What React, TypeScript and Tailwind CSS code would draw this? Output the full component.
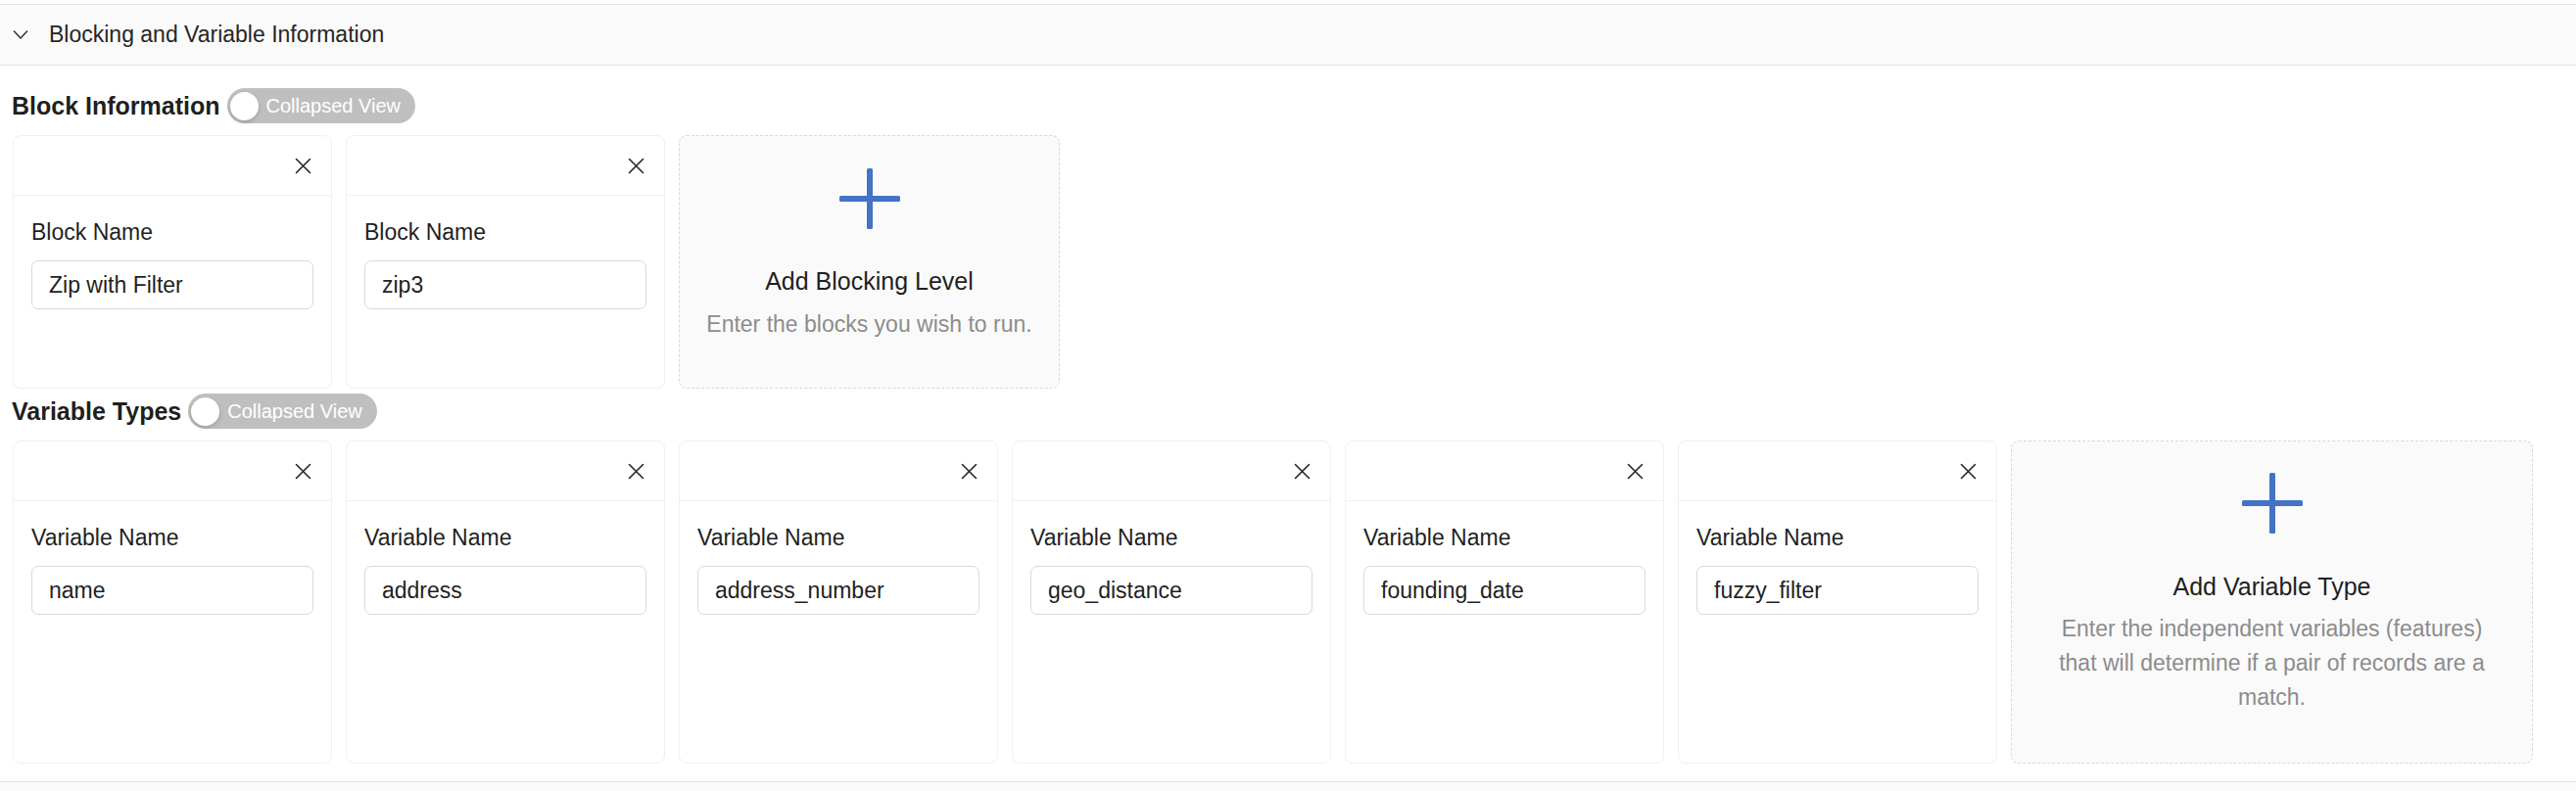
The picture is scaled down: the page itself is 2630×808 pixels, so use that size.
import React from "react";

const blocks = ["Zip with Filter", "zip3"];
const variables = [
	"name",
	"address",
	"address_number",
	"geo_distance",
	"founding_date",
	"fuzzy_filter",
];

function CloseIcon() {
	return (
		<svg width="17" height="17" viewBox="0 0 17 17" fill="none">
			<path
				d="M1.5 1.5 15.5 15.5M15.5 1.5 1.5 15.5"
				stroke="#262626"
				strokeWidth="1.6"
				strokeLinecap="round"
			/>
		</svg>
	);
}

function PlusIcon() {
	return (
		<svg width="62" height="62" viewBox="0 0 62 62">
			<rect x="28" y="0" width="6" height="62" rx="1.5" fill="#4472c4" />
			<rect x="0" y="28" width="62" height="6" rx="1.5" fill="#4472c4" />
		</svg>
	);
}

function Toggle() {
	return (
		<button className="ml-[7px] flex h-[36px] items-center rounded-full bg-[#bfbfbf] pl-[3px] pr-[15px]">
			<span className="h-[29px] w-[29px] rounded-full bg-white shadow-[0_2px_4px_rgba(0,35,11,0.2)]" />
			<span className="ml-[8px] text-[20px] leading-none text-white">
				Collapsed View
			</span>
		</button>
	);
}

function SectionTitle({ title, className }: { title: string; className: string }) {
	return (
		<div className={"flex h-[36px] items-center px-[12px] " + className}>
			<h3 className="text-[25px] font-bold leading-none text-[#1f1f1f]">
				{title}
			</h3>
			<Toggle />
		</div>
	);
}

function FieldCard({ label, value }: { label: string; value: string }) {
	return (
		<div className="flex w-[326px] flex-col rounded-[8px] border border-[#f0f0f0] bg-white">
			<div className="flex h-[61px] items-center justify-end border-b border-[#f0f0f0] pr-[20px]">
				<CloseIcon />
			</div>
			<div className="px-[18px] pt-[21px]">
				<div className="text-[23px] leading-[32px] text-[#1f1f1f]">{label}</div>
				<div className="mt-[13px] flex h-[50px] items-center rounded-[7px] border border-[#d9d9d9] bg-white pl-[17px] text-[23px] text-[#1f1f1f]">
					{value}
				</div>
			</div>
		</div>
	);
}

export default function App() {
	return (
		<div className="h-[808px] w-[2630px] overflow-hidden bg-white font-['Liberation_Sans',Arial,sans-serif] text-[#1f1f1f]">
			<div className="h-[4px]" />
			<div className="flex h-[63px] items-center border-y border-[#e3e3e3] bg-[#fafafa] pl-[13px]">
				<svg width="16" height="11" viewBox="0 0 16 11" fill="none">
					<path
						d="M1 1.5 8 9 15 1.5"
						stroke="#333333"
						strokeWidth="1.5"
						strokeLinejoin="round"
					/>
				</svg>
				<span className="ml-[21px] text-[23px] text-[#262626]">
					Blocking and Variable Information
				</span>
			</div>

			<SectionTitle title="Block Information" className="mt-[23px]" />
			<div className="mt-[12px] flex gap-[14px] px-[13px]">
				{blocks.map((b) => (
					<FieldCard key={b} label="Block Name" value={b} />
				))}
				<div className="flex h-[259px] w-[389px] flex-col items-center rounded-[8px] border border-dashed border-[#d9d9d9] bg-[#fafafa] pt-[33px] text-center">
					<PlusIcon />
					<div className="mt-[36px] text-[25px] leading-[35px] text-[#1f1f1f]">
						Add Blocking Level
					</div>
					<div className="mt-[9px] whitespace-nowrap text-[23px] leading-[35px] text-[#8c8c8c]">
						Enter the blocks you wish to run.
					</div>
				</div>
			</div>

			<SectionTitle title="Variable Types" className="mt-[5px]" />
			<div className="mt-[12px] flex gap-[14px] px-[13px]">
				{variables.map((v) => (
					<FieldCard key={v} label="Variable Name" value={v} />
				))}
				<div className="flex h-[330px] w-[533px] flex-col items-center rounded-[8px] border border-dashed border-[#d9d9d9] bg-[#fafafa] px-[38px] pt-[32px] text-center">
					<PlusIcon />
					<div className="mt-[37px] text-[25px] leading-[35px] text-[#1f1f1f]">
						Add Variable Type
					</div>
					<div className="mt-[8px] text-[23px] leading-[35px] text-[#8c8c8c]">
						Enter the independent variables (features) that will determine if a
						pair of records are a match.
					</div>
				</div>
			</div>

			<div className="mt-[18px] h-[40px] border-t border-[#e3e3e3] bg-[#fafafa]" />
		</div>
	);
}
